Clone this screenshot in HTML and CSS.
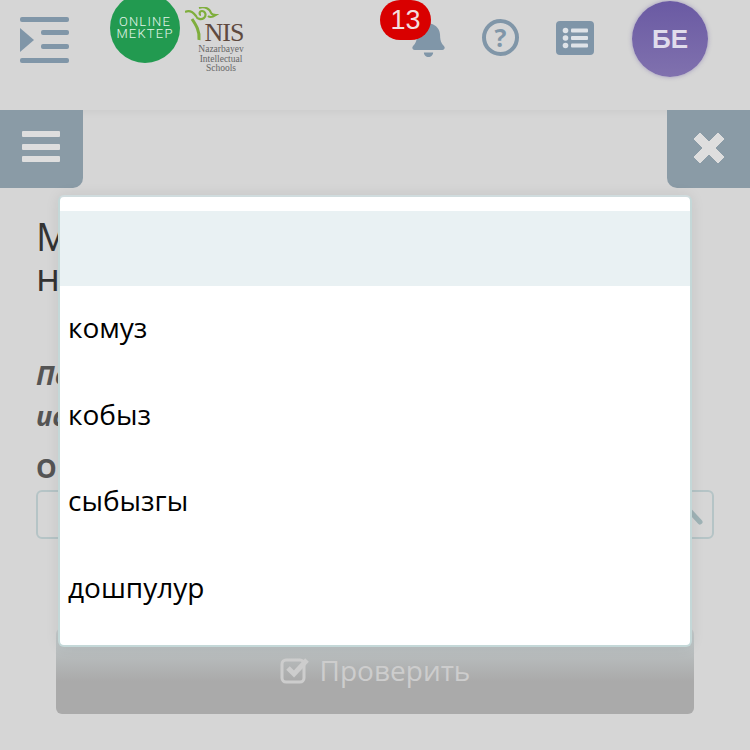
FILE: index.html
```html
<!DOCTYPE html>
<html lang="ru">
<head>
    <meta charset="UTF-8">
    <meta name="viewport" content="width=device-width, initial-scale=1.0">
    <title>Online Mektep</title>
    <link rel="stylesheet" href="styles.css">
</head>
<body>
    <header class="header">
        <svg class="indent-icon" width="49" height="46" viewBox="0 0 49 46">
            <rect x="0" y="0" width="49" height="5" rx="2"/>
            <rect x="21" y="13" width="28" height="5" rx="2"/>
            <rect x="21" y="27" width="28" height="5" rx="2"/>
            <rect x="0" y="41" width="49" height="5" rx="2"/>
            <path d="M0 11 L14 23 L0 35 Z"/>
        </svg>
        <div class="logo-circle">
            <span>ONLINE</span>
            <span>MEKTEP</span>
        </div>
        <div class="logo-nis">
            <svg class="nis-swirl" width="34" height="34" viewBox="0 0 34 34">
                <path d="M14 33 C 15 24 11 18 7 12" fill="none" stroke="#7fae3c" stroke-width="3"/>
                <path d="M0 5 C 4 3 8 5 11 9 C 12 12 16 13 19 11 C 22 8 20 4 17 4 C 14 4 14 8 16 8" fill="none" stroke="#7fae3c" stroke-width="2.2"/>
                <path d="M14 1 C 20 -1 25 2 26 6 C 27 8 29 8 31 8 C 28 10 25 11 23 9" fill="none" stroke="#7fae3c" stroke-width="2"/>
            </svg>
            <div class="nis-name">NIS</div>
            <div class="nis-caption">Nazarbayev<br>Intellectual<br>Schools</div>
        </div>
        <div class="header-tools">
            <div class="bell">
                <svg width="33" height="37" viewBox="0 0 448 512">
                    <path d="M224 512c35.32 0 63.97-28.65 63.97-64H160.03c0 35.35 28.65 64 63.97 64zm215.39-149.71c-19.32-20.76-55.47-51.99-55.47-154.29 0-77.7-54.48-139.9-127.94-155.16V32c0-17.67-14.32-32-31.98-32s-31.98 14.33-31.98 32v20.84C118.56 68.1 64.08 130.3 64.08 208c0 102.3-36.15 133.53-55.47 154.29-6 6.45-8.66 14.16-8.61 21.71.11 16.4 12.98 32 32.1 32h383.8c19.12 0 32-15.6 32.1-32 .05-7.55-2.61-15.27-8.61-21.71z"/>
                </svg>
                <span class="badge">13</span>
            </div>
            <div class="help">?</div>
            <svg class="list-icon" width="38" height="34" viewBox="0 0 38 34">
                <rect width="38" height="34" rx="4"/>
                <circle cx="9.5" cy="9.5" r="2.8" class="light"/>
                <circle cx="9.5" cy="17" r="2.8" class="light"/>
                <circle cx="9.5" cy="24.5" r="2.8" class="light"/>
                <rect x="15" y="7.5" width="17" height="4" rx="1" class="light"/>
                <rect x="15" y="15" width="17" height="4" rx="1" class="light"/>
                <rect x="15" y="22.5" width="17" height="4" rx="1" class="light"/>
            </svg>
            <div class="avatar">БЕ</div>
        </div>
    </header>

    <div class="toolbar">
        <div class="tab tab-left">
            <div class="burger"><i></i><i></i><i></i></div>
        </div>
        <div class="tab tab-right">
            <svg width="30" height="30" viewBox="0 0 30 30">
                <path d="M6 0 L15 9 L24 0 L30 6 L21 15 L30 24 L24 30 L15 21 L6 30 L0 24 L9 15 L0 6 Z" fill="#dedede" stroke="#dedede" stroke-width="1" stroke-linejoin="round"/>
            </svg>
        </div>
    </div>

    <main class="content">
        <h2 class="question">Му<br>на</h2>
        <p class="hint">По<br>ис</p>
        <div class="answer-label">О</div>
        <div class="answer-input">
            <svg width="40" height="40" viewBox="0 0 40 40">
                <circle cx="10" cy="10" r="8" fill="none" stroke="#9fb3b6" stroke-width="4"/>
                <path d="M20 14 L32 27" stroke="#9fb3b6" stroke-width="5" stroke-linecap="round"/>
            </svg>
        </div>
        <button class="check-btn">
            <svg width="30" height="28" viewBox="0 0 30 28">
                <rect x="2" y="4" width="22" height="22" rx="4" fill="none" stroke="#cdcdcd" stroke-width="3"/>
                <path d="M8 12 L14 18 L27 4" fill="none" stroke="#cdcdcd" stroke-width="5"/>
            </svg>
            Проверить
        </button>
    </main>

    <div class="modal">
        <div class="option option-active"></div>
        <div class="option">комуз</div>
        <div class="option">кобыз</div>
        <div class="option">сыбызгы</div>
        <div class="option">дошпулур</div>
    </div>
</body>
</html>
```

FILE: styles.css
```css
html, body {
    height: 100%;
}
body {
    margin: 0;
    height: 750px;
    overflow: hidden;
    position: relative;
    background: #d6d6d6;
    font-family: "Open Sans", sans-serif;
    color: #333;
}

/* header */
.header {
    height: 110px;
    display: flex;
    align-items: flex-start;
    box-shadow: 0 2px 8px rgba(0,0,0,0.05);
}
.indent-icon {
    margin: 17px 0 0 20px;
    fill: #8096a8;
}
.logo-circle {
    width: 70px;
    height: 70px;
    margin: -7px 0 0 41px;
    border-radius: 50%;
    background: #229a50;
    color: #e2f5e9;
    font-family: "Roboto", sans-serif;
    font-weight: 300;
    font-size: 13px;
    line-height: 12px;
    letter-spacing: 1.2px;
    display: flex;
    flex-direction: column;
    align-items: center;
    justify-content: center;
}
.logo-nis {
    position: relative;
    width: 60px;
    margin: 21px 0 0 5px;
    text-align: center;
    font-family: "Liberation Serif", serif;
}
.nis-swirl {
    position: absolute;
    left: 0;
    top: -14px;
}
.nis-name {
    margin-left: 18px;
    font-size: 26px;
    line-height: 24px;
    letter-spacing: -1px;
    color: #5f4a3f;
}
.nis-caption {
    margin-left: 12px;
    font-size: 9.5px;
    line-height: 9.5px;
    color: #666;
}
.header-tools {
    display: flex;
    align-items: flex-start;
    margin-left: 167px;
}
.bell {
    position: relative;
    margin-top: 20px;
    fill: #8096a8;
    line-height: 0;
}
.badge {
    position: absolute;
    left: -32px;
    top: -20px;
    width: 51px;
    height: 40px;
    border-radius: 20px;
    background: #d90000;
    color: #f3dede;
    font-family: "Liberation Sans", sans-serif;
    font-size: 27px;
    line-height: 40px;
    text-align: center;
}
.help {
    width: 29px;
    height: 29px;
    margin: 19px 0 0 37px;
    border: 4px solid #8096a8;
    border-radius: 50%;
    color: #8096a8;
    font-weight: 700;
    font-size: 25px;
    line-height: 29px;
    text-align: center;
}
.list-icon {
    margin: 21px 0 0 37px;
    fill: #7f95a8;
}
.list-icon .light {
    fill: #dfe3e8;
}
.avatar {
    width: 76px;
    height: 76px;
    margin: 1px 0 0 38px;
    border-radius: 50%;
    background: linear-gradient(#6a5aa3, #8071ae);
    box-shadow: 0 0 4px rgba(106,90,163,0.5);
    color: #e0dcec;
    font-family: "Liberation Sans", sans-serif;
    font-weight: 700;
    font-size: 26px;
    line-height: 76px;
    text-align: center;
}

/* toolbar */
.toolbar {
    display: flex;
    justify-content: space-between;
    height: 78px;
}
.tab {
    width: 83px;
    display: flex;
    align-items: center;
    justify-content: center;
    box-sizing: border-box;
    background: #8a9ba6;
}
.tab-left {
    border-bottom-right-radius: 10px;
    padding: 0 2px 5px 0;
}
.tab-right {
    border-bottom-left-radius: 10px;
    padding-bottom: 2px;
}
.burger {
    display: flex;
    flex-direction: column;
    gap: 6.5px;
}
.burger i {
    display: block;
    width: 38px;
    height: 6px;
    border-radius: 1px;
    background: #dedede;
}

/* page behind the popup */
.content {
    padding: 28px 36px 0;
}
.question {
    margin: 0;
    font-weight: 400;
    font-size: 38px;
    line-height: 40px;
}
.hint {
    margin: 58px 0 0;
    font-weight: 700;
    font-style: italic;
    font-size: 27px;
    line-height: 41px;
    color: #555;
}
.answer-label {
    margin-top: 14px;
    font-weight: 700;
    font-size: 26px;
    line-height: 36px;
    color: #555;
}
.answer-input {
    box-sizing: border-box;
    height: 49px;
    margin-top: 4px;
    border: 2px solid #b5c4c6;
    border-radius: 6px;
    display: flex;
    justify-content: flex-end;
    align-items: center;
    padding-right: 4px;
}
.check-btn {
    display: flex;
    align-items: center;
    justify-content: center;
    gap: 10px;
    width: 638px;
    height: 86px;
    margin: 89px 20px 0;
    padding: 0 0 2px;
    box-sizing: border-box;
    border: none;
    border-radius: 6px;
    background: linear-gradient(#c5cbcc 0, #bcc2c3 20%, #aaaaaa 62%);
    color: #cdcdcd;
    font-family: "Open Sans", sans-serif;
    font-size: 28px;
}

/* popup list */
.modal {
    position: absolute;
    left: 58px;
    top: 195px;
    width: 630px;
    padding: 14px 0 13px;
    background: #fff;
    border: 2px solid #c4d8d8;
    border-top-color: #d0dcde;
    border-radius: 6px;
    box-shadow: 0 0 14px rgba(0,0,0,0.08);
}
.option {
    height: 86.5px;
    padding-left: 8px;
    font-size: 28px;
    line-height: 83px;
    color: #000;
}
.option-active {
    height: 75px;
    background: #e9f1f3;
}
```
